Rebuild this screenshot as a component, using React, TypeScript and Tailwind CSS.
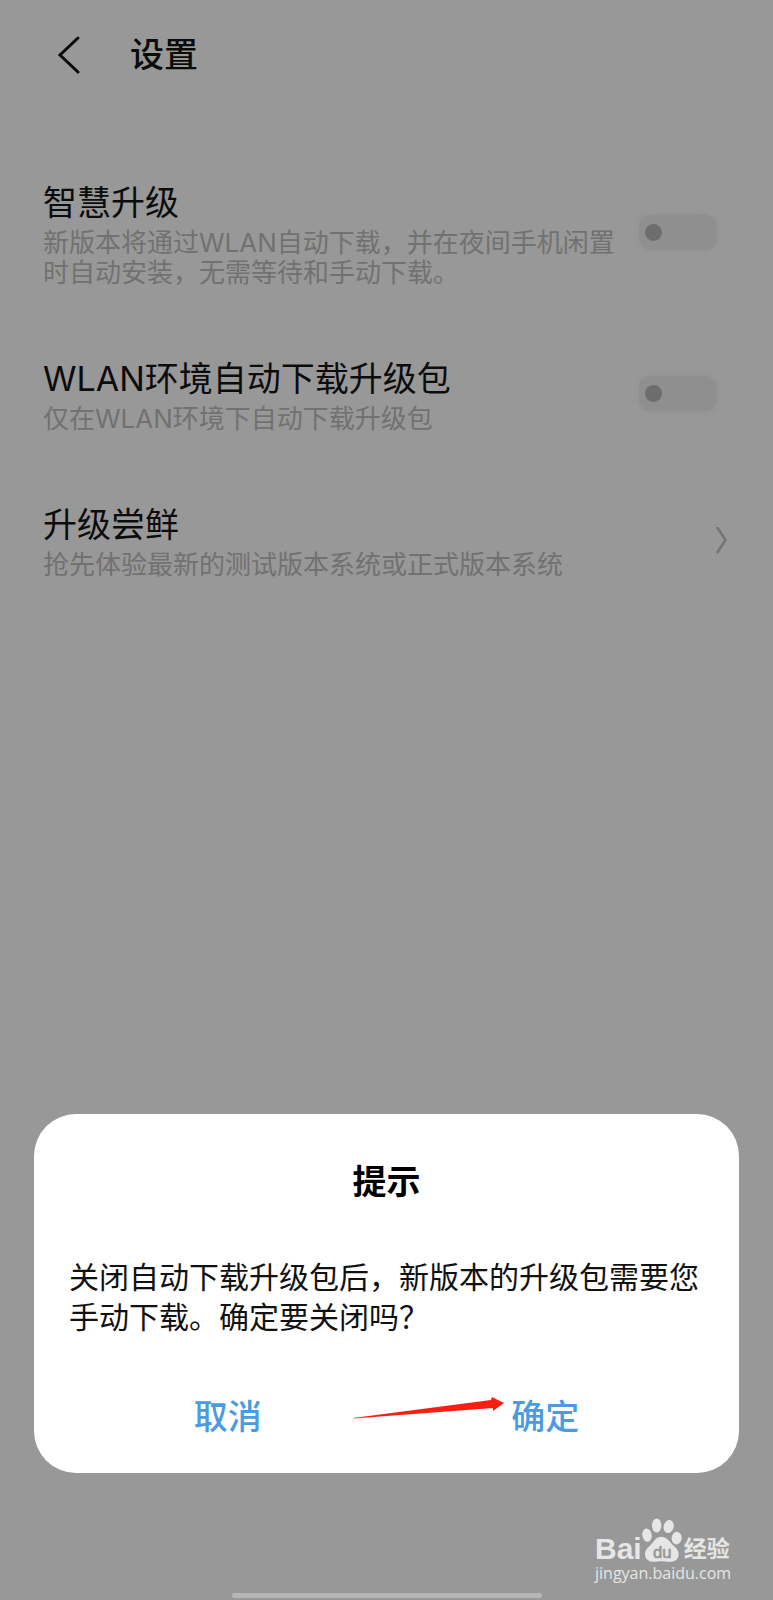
import type { ReactNode } from "react";

type SettingRowProps = {
  title: string;
  desc: string;
  children: ReactNode;
};

function SettingRow({ title, desc, children }: SettingRowProps) {
  return (
    <li className="flex items-center justify-between">
      <div className="w-[584px] min-w-0">
        <h2 className="text-[34px] leading-[44px] text-[#0c0c0c]">{title}</h2>
        <p className="mt-[3px] text-[26px] leading-[30px] text-[#717171]">{desc}</p>
      </div>
      {children}
    </li>
  );
}

function Toggle({ label }: { label: string }) {
  return (
    <input
      type="checkbox"
      role="switch"
      aria-label={label}
      className="mr-3 mb-1 h-[35px] w-[78px] shrink-0 appearance-none rounded-xl bg-[#8f8f8f] shadow-[0_0_4px_1px_#939393] before:mt-[9px] before:ml-[6px] before:block before:size-[17px] before:rounded-full before:bg-[#6d6d6d] before:content-['']"
    />
  );
}

function Watermark() {
  return (
    <div className="mr-10 w-[138px] text-[#e6e6e6]">
      <div className="flex h-[46px] items-end">
        <span className="font-['Liberation_Sans',sans-serif] text-[30px] leading-[28px] font-bold">
          Bai
        </span>
        <svg viewBox="212 52 120 134" className="mr-[2px] h-[45px] w-10 shrink-0" fill="currentColor">
          <ellipse cx="227" cy="103" rx="14" ry="20" transform="rotate(-8 227 103)" />
          <ellipse cx="256" cy="74" rx="14" ry="21" />
          <ellipse cx="292" cy="77" rx="15" ry="20" transform="rotate(12 292 77)" />
          <ellipse cx="316" cy="112" rx="15" ry="19" transform="rotate(8 316 112)" />
          <path d="M270 108c16 0 22 12 32 22 11 10 21 18 20 32-1 15-13 22-27 21-9-1-16-2-24-2s-15 2-24 2c-14 0-25-7-26-22-1-13 9-21 19-31 10-11 15-22 30-22z" />
          <text
            x="273"
            y="171"
            textAnchor="middle"
            fontSize="50"
            fill="#989898"
            stroke="#989898"
            strokeWidth="2"
            fontFamily="Liberation Sans, sans-serif"
          >
            du
          </text>
        </svg>
        <span className="text-[23px] leading-[28px] font-bold">经验</span>
      </div>
      <a
        href="#"
        className="block font-['Open_Sans',sans-serif] text-[16px] leading-5 whitespace-nowrap"
      >
        jingyan.baidu.com
      </a>
    </div>
  );
}

export default function App() {
  return (
    <div
      lang="zh-CN"
      className="flex min-h-screen flex-col bg-[#989898] font-['Inter','Noto_Sans_CJK_SC',sans-serif]"
    >
      <header className="flex items-center pt-[33px] pl-14">
        <button type="button" aria-label="返回" className="mr-[46px]">
          <svg viewBox="0 0 28 40" className="h-10 w-7" fill="none" stroke="#0a0a0a" strokeWidth="3">
            <path d="M22 3 4 20l18 17" strokeLinecap="round" />
          </svg>
        </button>
        <h1 className="text-[34px] leading-[44px] font-medium text-[#0a0a0a]">设置</h1>
      </header>

      <ul className="mt-[104px] flex flex-1 flex-col gap-[69px] pr-11 pl-[43px]">
        <SettingRow
          title="智慧升级"
          desc="新版本将通过WLAN自动下载，并在夜间手机闲置时自动安装，无需等待和手动下载。"
        >
          <Toggle label="智慧升级" />
        </SettingRow>
        <SettingRow title="WLAN环境自动下载升级包" desc="仅在WLAN环境下自动下载升级包">
          <Toggle label="WLAN环境自动下载升级包" />
        </SettingRow>
        <SettingRow title="升级尝鲜" desc="抢先体验最新的测试版本系统或正式版本系统">
          <button type="button" aria-label="升级尝鲜">
            <svg viewBox="0 0 16 30" className="h-[30px] w-4" fill="none" stroke="#747474" strokeWidth="2.6">
              <path d="M4 0 12.500 13 4 26" />
            </svg>
          </button>
        </SettingRow>
      </ul>

      <section
        role="dialog"
        aria-labelledby="tip-title"
        className="mx-[34px] rounded-[42px] bg-white px-[35px] pt-[46px] pb-[33px] text-black"
      >
        <h2 id="tip-title" className="text-center text-[34px] leading-[44px] font-bold">
          提示
        </h2>
        <p className="mt-[53px] text-[30px] leading-10 text-[#111]">
          关闭自动下载升级包后，新版本的升级包需要您手动下载。确定要关闭吗？
        </p>
        <div className="relative mt-[57px] flex text-[34px] leading-[46px] font-medium text-[#4a9be0]">
          <button type="button" className="flex-1">
            取消
          </button>
          <button type="button" className="flex-1">
            确定
          </button>
          <svg
            viewBox="0 0 152 24"
            className="pointer-events-none absolute top-[3px] left-[284px] h-6 w-[152px]"
            fill="#f81f12"
          >
            <path d="M0 21 138 3 139 0 151 6 140 14 140 11 1 21.500z" />
          </svg>
        </div>
      </section>

      <footer className="flex flex-col items-end pt-11 pb-[2px]">
        <Watermark />
        <div className="mt-[10px] h-[5px] w-[310px] self-center rounded-full bg-[#b6b6b6]" />
      </footer>
    </div>
  );
}
